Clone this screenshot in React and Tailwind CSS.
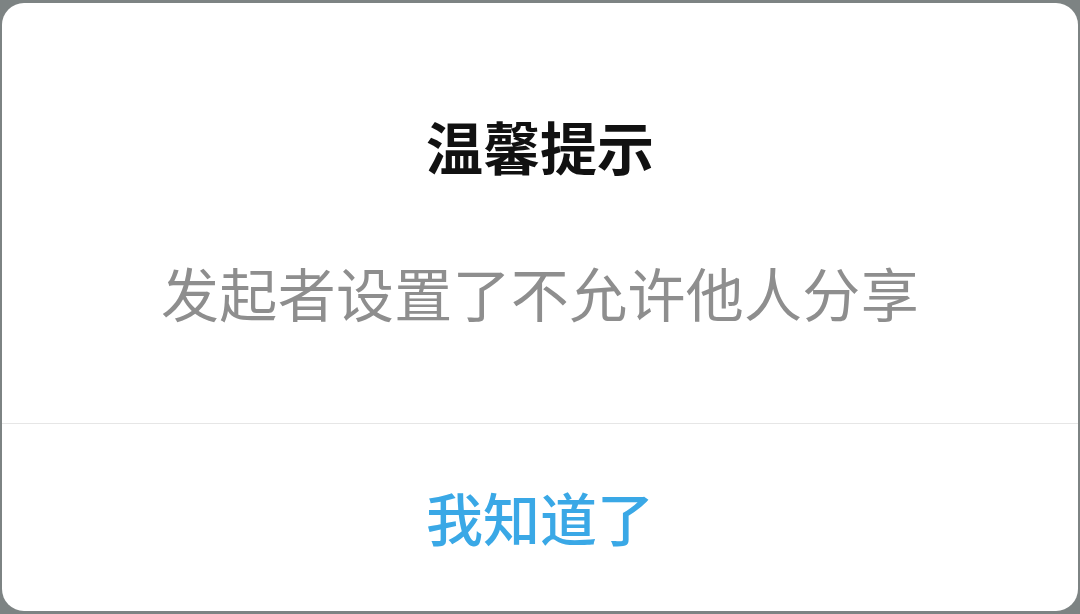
export default function App() {
  return (
    <div className="w-[1080px] h-[614px] bg-[#7d8383] pt-[3px] pb-[3px] px-[2px] flex" style={{ fontFamily: '"Noto Sans CJK SC", "Noto Sans", sans-serif' }}>
      <div className="flex-1 bg-white rounded-[22px] flex flex-col overflow-hidden">
        <div className="flex flex-col items-center border-b border-[#e6e6e6] h-[421px] pt-[114px]">
          <div className="text-[57px] leading-none font-bold text-[#111111]">温馨提示</div>
          <div className="text-[58px] leading-none text-[#8e8e8e] mt-[89px] tracking-[0.3px]">发起者设置了不允许他人分享</div>
        </div>
        <div className="flex-1 flex items-center justify-center pb-[2px]">
          <div className="text-[57px] leading-none font-medium text-[#3aa8e6]">我知道了</div>
        </div>
      </div>
    </div>
  );
}
